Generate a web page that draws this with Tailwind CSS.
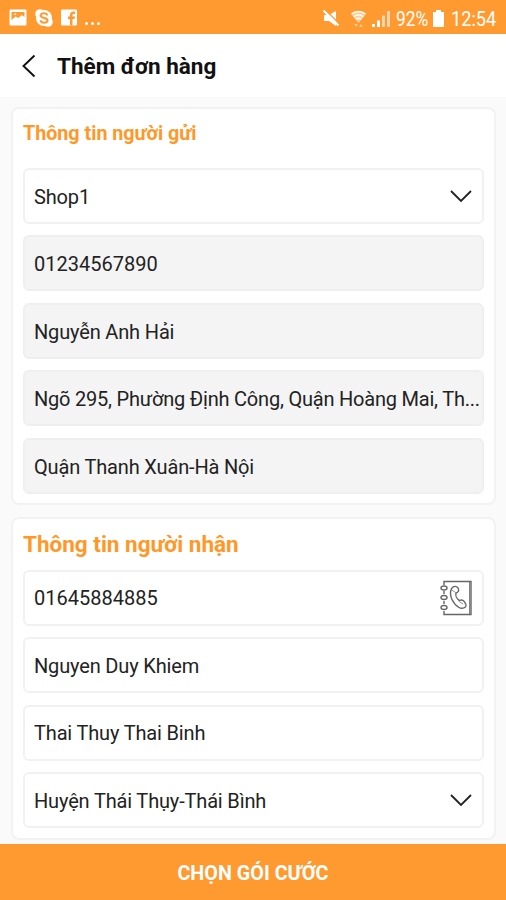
<!DOCTYPE html>
<html lang="vi" class="h-full">
  <head>
    <meta charset="UTF-8" />
    <meta name="viewport" content="width=device-width, initial-scale=1.0" />
    <title>Thêm đơn hàng</title>
    <script src="https://cdn.jsdelivr.net/npm/@tailwindcss/browser@4"></script>
  </head>
  <body class="h-full overflow-hidden font-['Roboto',sans-serif]">
    <div class="h-full flex flex-col bg-[#fafafa] text-[#222]">
      <!-- status bar -->
      <div
        class="h-[34px] shrink-0 bg-[#ff9a30] flex items-center justify-between pl-[9px] pr-[10px] text-white"
      >
        <div class="flex items-center gap-2 pt-px">
          <svg class="w-[18px] h-[17px]" viewBox="0 0 18 17">
            <rect x="0.5" y="0.5" width="17" height="16" rx="1" fill="#fff" />
            <path d="M2.5 11V3h13v5l-3-2-3 3-3-1.5z" fill="#ff9a30" />
            <path d="M4.5 5.5l2-1.5 1 2z" fill="#fff" />
          </svg>
          <svg class="w-[18px] h-[18px]" viewBox="0 0 18 18">
            <circle cx="9" cy="9" r="8" fill="#fff" />
            <circle cx="5" cy="5" r="4.8" fill="#fff" />
            <circle cx="13" cy="13" r="4.8" fill="#fff" />
            <path
              d="M12.4 6.4C11.8 4.8 10.5 4.3 9 4.3c-2 0-3.4.9-3.4 2.3 0 3.2 7 1.6 7 4.7 0 1.5-1.6 2.4-3.6 2.4-1.9 0-3.1-.8-3.6-2.3"
              fill="none"
              stroke="#ff9a30"
              stroke-width="2"
            />
          </svg>
          <svg class="w-4 h-[17px]" viewBox="0 0 16 17">
            <rect y="0.5" width="16" height="16" rx="1" fill="#fff" />
            <path
              d="M9 16.5V10H7V7.6h2V6c0-2.3 1.3-3.5 3.3-3.5H14v2.4h-1.3c-1 0-1.2.5-1.2 1.3v1.4H14l-.4 2.4h-2.1v6.5z"
              fill="#ff9a30"
            />
          </svg>
          <div class="flex gap-[3px] pt-[12px]">
            <span class="size-[3px] rounded-full bg-white"></span>
            <span class="size-[3px] rounded-full bg-white"></span>
            <span class="size-[3px] rounded-full bg-white"></span>
          </div>
        </div>
        <div class="flex items-center pt-[3px]">
          <svg class="w-[17px] h-[17px] mr-[10px]" viewBox="0 0 17 17">
            <path d="M1 5h5l7-4v15l-7-5H1z" fill="#fff" />
            <path d="M2.5 0l14 14" stroke="#ff9a30" stroke-width="1.2" />
            <path d="M0.5 0.5l15 15" stroke="#fff" stroke-width="2" />
          </svg>
          <svg class="w-[17px] h-[18px] mr-[5px]" viewBox="0 0 17 18">
            <path
              d="M1 4c4.5-4 10.5-4 15 0l-7.5 9z"
              fill="#fff"
              fill-opacity="0.5"
            />
            <g fill="none" stroke="#fff" stroke-width="1.5">
              <path d="M1.5 4c4-3.4 10-3.4 14 0" />
              <path d="M3.7 6.8c2.8-2.3 6.8-2.3 9.6 0" />
              <path d="M5.8 9.3c1.6-1.3 3.8-1.3 5.4 0" />
            </g>
            <path
              d="M4 14h4l-2 3zM9 17h4l-2-3z"
              fill="#fff"
              fill-opacity="0.5"
            />
          </svg>
          <svg class="w-[18px] h-[17px] mr-[6px]" viewBox="0 0 18 17">
            <path d="M0 14h3v3H0zM5 10.5h3V17H5z" fill="#fff" />
            <path
              d="M10 5.5h3V17h-3zM15 1h3v16h-3z"
              fill="#fff"
              fill-opacity="0.6"
            />
          </svg>
          <span
            class="w-[34px] text-[20px] leading-5 origin-left scale-x-[0.87] whitespace-nowrap"
            >92%</span
          >
          <svg class="w-[11px] h-[17px] mr-[7px] ml-[3px]" viewBox="0 0 11 17">
            <path d="M3 0h5v2h3v15H0V2h3z" fill="#fff" />
          </svg>
          <span
            class="w-[45px] text-[20px] leading-5 origin-left scale-x-[0.91] whitespace-nowrap"
            >12:54</span
          >
        </div>
      </div>

      <!-- header -->
      <div class="h-[63px] shrink-0 bg-white flex items-center pl-[22px]">
        <svg class="w-[14px] h-6" viewBox="0 0 14 24">
          <path
            d="M12.5 1.5L1.5 12l11 10.5"
            fill="none"
            stroke="#111"
            stroke-width="1.9"
          />
        </svg>
        <h1 class="ml-[21px] pt-[2px] text-[22.5px] font-bold text-[#111]">
          Thêm đơn hàng
        </h1>
      </div>

      <div class="grow pl-[11px] pr-[10px] pt-[10px] flex flex-col gap-3">
        <!-- sender -->
        <section
          class="h-[398px] rounded-lg border-2 border-[#f2f2f2] bg-white px-[10px]"
        >
          <h2
            class="h-[58.5px] pt-[11px] text-[19.7px] leading-[28px] font-bold text-[#ff9829]"
          >
            Thông tin người gửi
          </h2>
          <div class="flex flex-col gap-[11.5px] text-[20px] tracking-[-0.16px]">
            <div
              class="h-14 rounded-md border-2 border-[#f1f1f1] flex items-center justify-between pl-[9px] pr-[10px] pt-[2px]"
            >
              <span>Shop1</span>
              <svg class="w-[22px] h-[13px]" viewBox="0 0 22 13">
                <path
                  d="M1 1l10 10 10-10"
                  fill="none"
                  stroke="#222"
                  stroke-width="1.8"
                />
              </svg>
            </div>
            <div
              class="h-14 rounded-md border-2 border-[#efefef] bg-[#f4f4f4] flex items-center pl-[9px] pt-[2px] tracking-normal"
            >
              01234567890
            </div>
            <div
              class="h-14 rounded-md border-2 border-[#efefef] bg-[#f4f4f4] flex items-center pl-[9px] pt-[2px]"
            >
              Nguyễn Anh Hải
            </div>
            <div
              class="h-14 rounded-md border-2 border-[#efefef] bg-[#f4f4f4] flex items-center pl-[9px] pt-[2px] tracking-[-0.21px] whitespace-nowrap"
            >
              Ngõ 295, Phường Định Công, Quận Hoàng Mai, Th...
            </div>
            <div
              class="h-14 rounded-md border-2 border-[#efefef] bg-[#f4f4f4] flex items-center pl-[9px] pt-[2px]"
            >
              Quận Thanh Xuân-Hà Nội
            </div>
          </div>
        </section>

        <!-- receiver -->
        <section
          class="h-[323px] rounded-lg border-2 border-[#f2f2f2] bg-white px-[10px]"
        >
          <h2
            class="h-[50.5px] pt-[11px] text-[22.5px] leading-[28px] font-bold text-[#ff9829]"
          >
            Thông tin người nhận
          </h2>
          <div class="flex flex-col gap-[11.5px] text-[20px] tracking-[-0.16px]">
            <div
              class="h-14 rounded-md border-2 border-[#f1f1f1] flex items-center justify-between pl-[9px] pr-[10px] pt-px"
            >
              <span class="tracking-normal">01645884885</span>
              <svg
                class="w-8 h-[36px]"
                viewBox="0 0 32 36"
                fill="none"
                stroke="#666"
                stroke-width="1.4"
              >
                <path d="M4 5V1.5h27v33H4V31M4 11v3M4 21v3" />
                <path d="M29.7 2v32" stroke-width="1" />
                <ellipse cx="4" cy="8" rx="3" ry="2" />
                <ellipse cx="4" cy="17.5" rx="3" ry="2" />
                <ellipse cx="4" cy="27.5" rx="3" ry="2" />
                <path
                  d="M12.5 7.5c2-2 5.5-1 6 1.5.5 2-1 3.5-2.5 4-.8 2.8 1 6 3.5 7.500 1.500-.8 3.500-.5 4.500.8 1 1.500 2.500 3 2 4.700-1 2.300-4.500 3-7 1.500-6-3.500-10-12-8-17.500.3-1 .8-1.800 1.500-2.500z"
                />
                <path d="M12 10l3.5 2.5M18.5 21l4.5 3" stroke-width="0.7" />
              </svg>
            </div>
            <div
              class="h-14 rounded-md border-2 border-[#f1f1f1] flex items-center pl-[9px] pt-px"
            >
              Nguyen Duy Khiem
            </div>
            <div
              class="h-14 rounded-md border-2 border-[#f1f1f1] flex items-center pl-[9px] pt-px"
            >
              Thai Thuy Thai Binh
            </div>
            <div
              class="h-14 rounded-md border-2 border-[#f1f1f1] flex items-center justify-between pl-[9px] pr-[10px] pt-px"
            >
              <span>Huyện Thái Thụy-Thái Bình</span>
              <svg class="w-[22px] h-[13px]" viewBox="0 0 22 13">
                <path
                  d="M1 1l10 10 10-10"
                  fill="none"
                  stroke="#222"
                  stroke-width="1.8"
                />
              </svg>
            </div>
          </div>
        </section>
      </div>

      <button
        class="h-14 shrink-0 bg-[#ff9a30] pt-[3px] text-white text-[19.8px] font-bold cursor-pointer"
      >
        CHỌN GÓI CƯỚC
      </button>
    </div>
  </body>
</html>
